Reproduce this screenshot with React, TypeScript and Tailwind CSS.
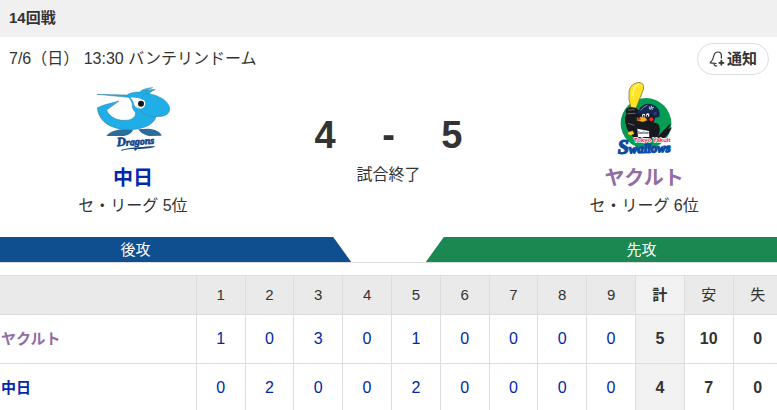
import React from "react";

type Team = {
  name: string;
  rank: string;
  nameClass: string;
  innings: number[];
  total: number;
  hits: number;
  errors: number;
};

const dragons: Team = {
  name: "中日",
  rank: "セ・リーグ 5位",
  nameClass: "text-[#0028ad]",
  innings: [0, 2, 0, 0, 2, 0, 0, 0, 0],
  total: 4,
  hits: 7,
  errors: 0,
};

const swallows: Team = {
  name: "ヤクルト",
  rank: "セ・リーグ 6位",
  nameClass: "text-[#926ca4]",
  innings: [1, 0, 3, 0, 1, 0, 0, 0, 0],
  total: 5,
  hits: 10,
  errors: 0,
};

const DragonsLogo = () => (
  <svg viewBox="24 12 240 240" className="size-20" aria-hidden="true">
    <path d="M64 183 C72 170 100 160 130 162 L144 164 C142 174 126 184 108 183 Z" fill="#2c6c9c" />
    <path d="M160 163 L190 161 C210 162 226 170 230 182 L192 183 C178 180 166 174 160 163 Z" fill="#2c6c9c" />
    <path
      d="M36 58 L126 60 C133 54 148 51 164 51 C170 44 184 39 203 38 C192 41 184 46 180 50 C190 44 202 43 211 44 C202 47 196 51 193 56 C226 63 254 80 254 102 C254 118 238 126 213 125 C209 146 176 164 132 164 C84 164 40 143 37 98 C57 88 82 84 102 78 L65 105 C70 121 91 136 116 136 C142 137 154 125 151 111 C143 105 141 96 142 89 C140 79 136 71 130 67 Z"
      fill="#20aee8"
      stroke="#397d9d"
      strokeWidth="1.5"
    />
    <path d="M136 68 C148 67 169 70 179 78 C184 89 178 99 168 101 C157 102 150 96 147 88 C145 80 143 73 136 68 Z" fill="#fff" />
    <path d="M161 97 C168 113 185 124 213 125 M193 56 C178 55 171 62 171 70" fill="none" stroke="#397d9d" strokeWidth="1.5" />
    <circle cx="168" cy="86" r="9" fill="#171717" />
    <text
      x="96"
      y="214"
      transform="rotate(-4 96 214)"
      fill="#14458c"
      stroke="#14458c"
      strokeWidth="2"
      className="font-['Liberation_Serif',serif] text-[30px] font-bold italic"
    >
      <tspan className="text-[38px]">D</tspan>ragons
    </text>
    <path d="M109 224 C145 216 177 216 210 213 C205 221 181 221 157 222 L150 228 L147 222 C133 222 120 224 109 228 Z" fill="#14458c" />
  </svg>
);

const SwallowsLogo = () => (
  <svg viewBox="12 12 240 240" className="size-20" aria-hidden="true">
    <circle cx="138" cy="145" r="76" fill="#079c54" />
    <path d="M173 185 C192 166 205 150 214 144 L205 163 L216 157 C209 173 201 185 186 194 L148 194 Z" fill="#171b20" />
    <path d="M87 73 L93 99 L108 100 L128 49 C137 28 124 20 112 23 C98 25 88 38 87 52 Z" fill="#ffe526" stroke="#65571e" strokeWidth="2" />
    <path d="M99 62 C99 42 105 31 116 29" fill="none" stroke="#fff89d" strokeWidth="4" />
    <path d="M77 108 C78 97 91 94 109 99 C122 110 119 124 109 129 L113 137 C135 140 149 136 174 146 C184 160 179 180 168 193 L108 193 C91 180 79 165 78 148 C73 139 74 123 79 119 Z" fill="#18191e" />
    <path d="M84 105 L104 104 M82 116 L107 115 M84 145 L103 151" stroke="#71645d" strokeWidth="3" />
    <path d="M112 118 L161 116 L165 132 L158 146 L116 143 Z" fill="#18191e" />
    <path d="M119 105 C124 89 144 84 160 91 C173 97 180 109 177 125 L164 127 L148 114 L115 118 L106 112 Z" fill="#172654" stroke="#0b1538" strokeWidth="2" />
    <path d="M122 106 C128 97 135 94 142 91" fill="none" stroke="#8593b5" strokeWidth="3" />
    <path d="M148 94 L151 105 M154 92 L157 105 M147 100 L162 97" stroke="#fff" strokeWidth="2" />
    <circle cx="165" cy="116" r="7" fill="#263c72" stroke="#0c183d" strokeWidth="2" />
    <ellipse cx="131" cy="122" rx="5" ry="6" fill="#fff" />
    <ellipse cx="143" cy="121" rx="5" ry="6" fill="#fff" />
    <path d="M131 120 L132 126 M142 120 L143 126" stroke="#16171b" strokeWidth="4" />
    <path d="M110 136 L122 125 L137 128 L142 136 L128 141 Z" fill="#f2b51c" stroke="#75501a" />
    <circle cx="154" cy="133" r="6" fill="#e72738" />
    <circle cx="118" cy="132" r="4" fill="#e72738" />
    <path d="M112 161 L147 168 L148 186 L114 186 Z" fill="#fff" />
    <text x="113" y="176" fill="#28345e" className="font-['Liberation_Sans',sans-serif] text-[8px] font-bold">
      Swallows
    </text>
    <path d="M84 171 L98 167 L103 176 L92 182 L83 178 Z" fill="#f7d720" stroke="#45401c" />
    <text
      x="102"
      y="202"
      fill="#ee1838"
      stroke="#fff"
      strokeWidth="4"
      paintOrder="stroke"
      className="font-['Liberation_Sans',sans-serif] text-[18px] font-bold"
    >
      Tokyo Yakult
    </text>
    <text
      x="54"
      y="236"
      transform="rotate(-2 54 236)"
      fill="#0b4aa2"
      stroke="#0b4aa2"
      strokeWidth="4"
      className="font-['Liberation_Serif',serif] text-[38px] font-bold italic"
    >
      <tspan className="text-[60px]">S</tspan>wallows
    </text>
  </svg>
);

const BellPlusIcon = () => (
  <svg viewBox="0 0 16 18" className="h-[18px] w-4" fill="none" stroke="currentColor" aria-hidden="true">
    <path d="M7.5 13.5 L1.2 12.8 C3.2 11 4 9.5 4.6 6.5 C5.2 3.6 6.4 2 8.8 2 C11.4 2 12.6 3.8 12.4 6.5 L12.3 8.6" strokeWidth="1.2" strokeLinejoin="round" />
    <path d="M5 13.5 C5 15.4 6.4 16.4 8.2 15.8" strokeWidth="1.2" />
    <path d="M12.4 10 V15.6 M9.6 12.8 H15.2" strokeWidth="1.8" />
  </svg>
);

const TeamSummary: React.FC<{ team: Team; logo: React.ReactNode }> = ({ team, logo }) => (
  <div className="flex flex-col items-center">
    {logo}
    <a href="#" className={`mt-1 text-xl leading-[30px] font-bold ${team.nameClass}`}>
      {team.name}
    </a>
    <p className="leading-[26px]">{team.rank}</p>
  </div>
);

const ScoreRow: React.FC<{ team: Team }> = ({ team }) => (
  <tr className="h-[49px] border-b border-[#ddd]">
    <th scope="row" className="pl-px text-left text-[15px]">
      <a href="#" className={team.nameClass}>
        {team.name}
      </a>
    </th>
    {team.innings.map((runs, i) => (
      <td key={i} className="border-l border-[#ddd]">
        <a href="#" className="text-[#0028ad]">
          {runs}
        </a>
      </td>
    ))}
    <td className="border-l border-[#ddd] bg-[#f2f2f2] font-bold">{team.total}</td>
    <td className="border-l border-[#ddd] font-bold">{team.hits}</td>
    <td className="border-l border-[#ddd] font-bold">{team.errors}</td>
  </tr>
);

export default function App() {
  return (
    <main className="overflow-hidden bg-white font-['Liberation_Sans','Noto_Sans_CJK_JP',sans-serif] text-base text-[#333]">
      <h1 className="bg-[#f0f0f0] px-[9px] pt-[7px] pb-[9px] text-[15px] leading-[21px] font-bold">14回戦</h1>

      <div className="flex items-center justify-between pt-1.5 pr-2 pl-[9px]">
        <p>7/6（日） 13:30 バンテリンドーム</p>
        <button
          type="button"
          className="flex h-8 items-center gap-0.5 rounded-full border border-[#ddd] px-[11px] text-[15px] font-bold"
        >
          <BellPlusIcon />
          通知
        </button>
      </div>

      <section className="grid grid-cols-[13fr_12fr_13fr] pt-1">
        <TeamSummary team={dragons} logo={<DragonsLogo />} />
        <div className="flex flex-col items-center pt-8">
          <div className="grid w-[190px] grid-cols-3 text-center text-[38px] leading-[48px] font-bold">
            <span>{dragons.total}</span>
            <span>-</span>
            <span>{swallows.total}</span>
          </div>
          <p className="leading-8">試合終了</p>
        </div>
        <TeamSummary team={swallows} logo={<SwallowsLogo />} />
      </section>

      <div className="mt-[18px] flex justify-between border-b border-[#ddd] text-center text-[15px] leading-[25px] text-white">
        <div className="w-[45.2%] bg-[#0f4f8f] pr-20 [clip-path:polygon(0_0,calc(100%-18px)_0,100%_100%,0_100%)]">
          後攻
        </div>
        <div className="w-[45.2%] bg-[#1b8751] pl-20 [clip-path:polygon(18px_0,100%_0,100%_100%,0_100%)]">
          先攻
        </div>
      </div>

      <div className="-mr-[5px] mt-3">
        <table className="w-full table-fixed border-collapse text-center">
          <thead>
            <tr className="h-[39px] border-y border-[#ddd] bg-[#eaeaea] text-[15px]">
              <td className="w-[25.1%]" />
              {dragons.innings.map((_, i) => (
                <th key={i} scope="col" className="border-l border-[#ddd] font-normal">
                  {i + 1}
                </th>
              ))}
              <th scope="col" className="border-l border-[#ddd] bg-[#f2f2f2] font-bold">
                計
              </th>
              <th scope="col" className="border-l border-[#ddd] font-normal">
                安
              </th>
              <th scope="col" className="border-l border-[#ddd] font-normal">
                失
              </th>
            </tr>
          </thead>
          <tbody>
            <ScoreRow team={swallows} />
            <ScoreRow team={dragons} />
          </tbody>
        </table>
      </div>
    </main>
  );
}
